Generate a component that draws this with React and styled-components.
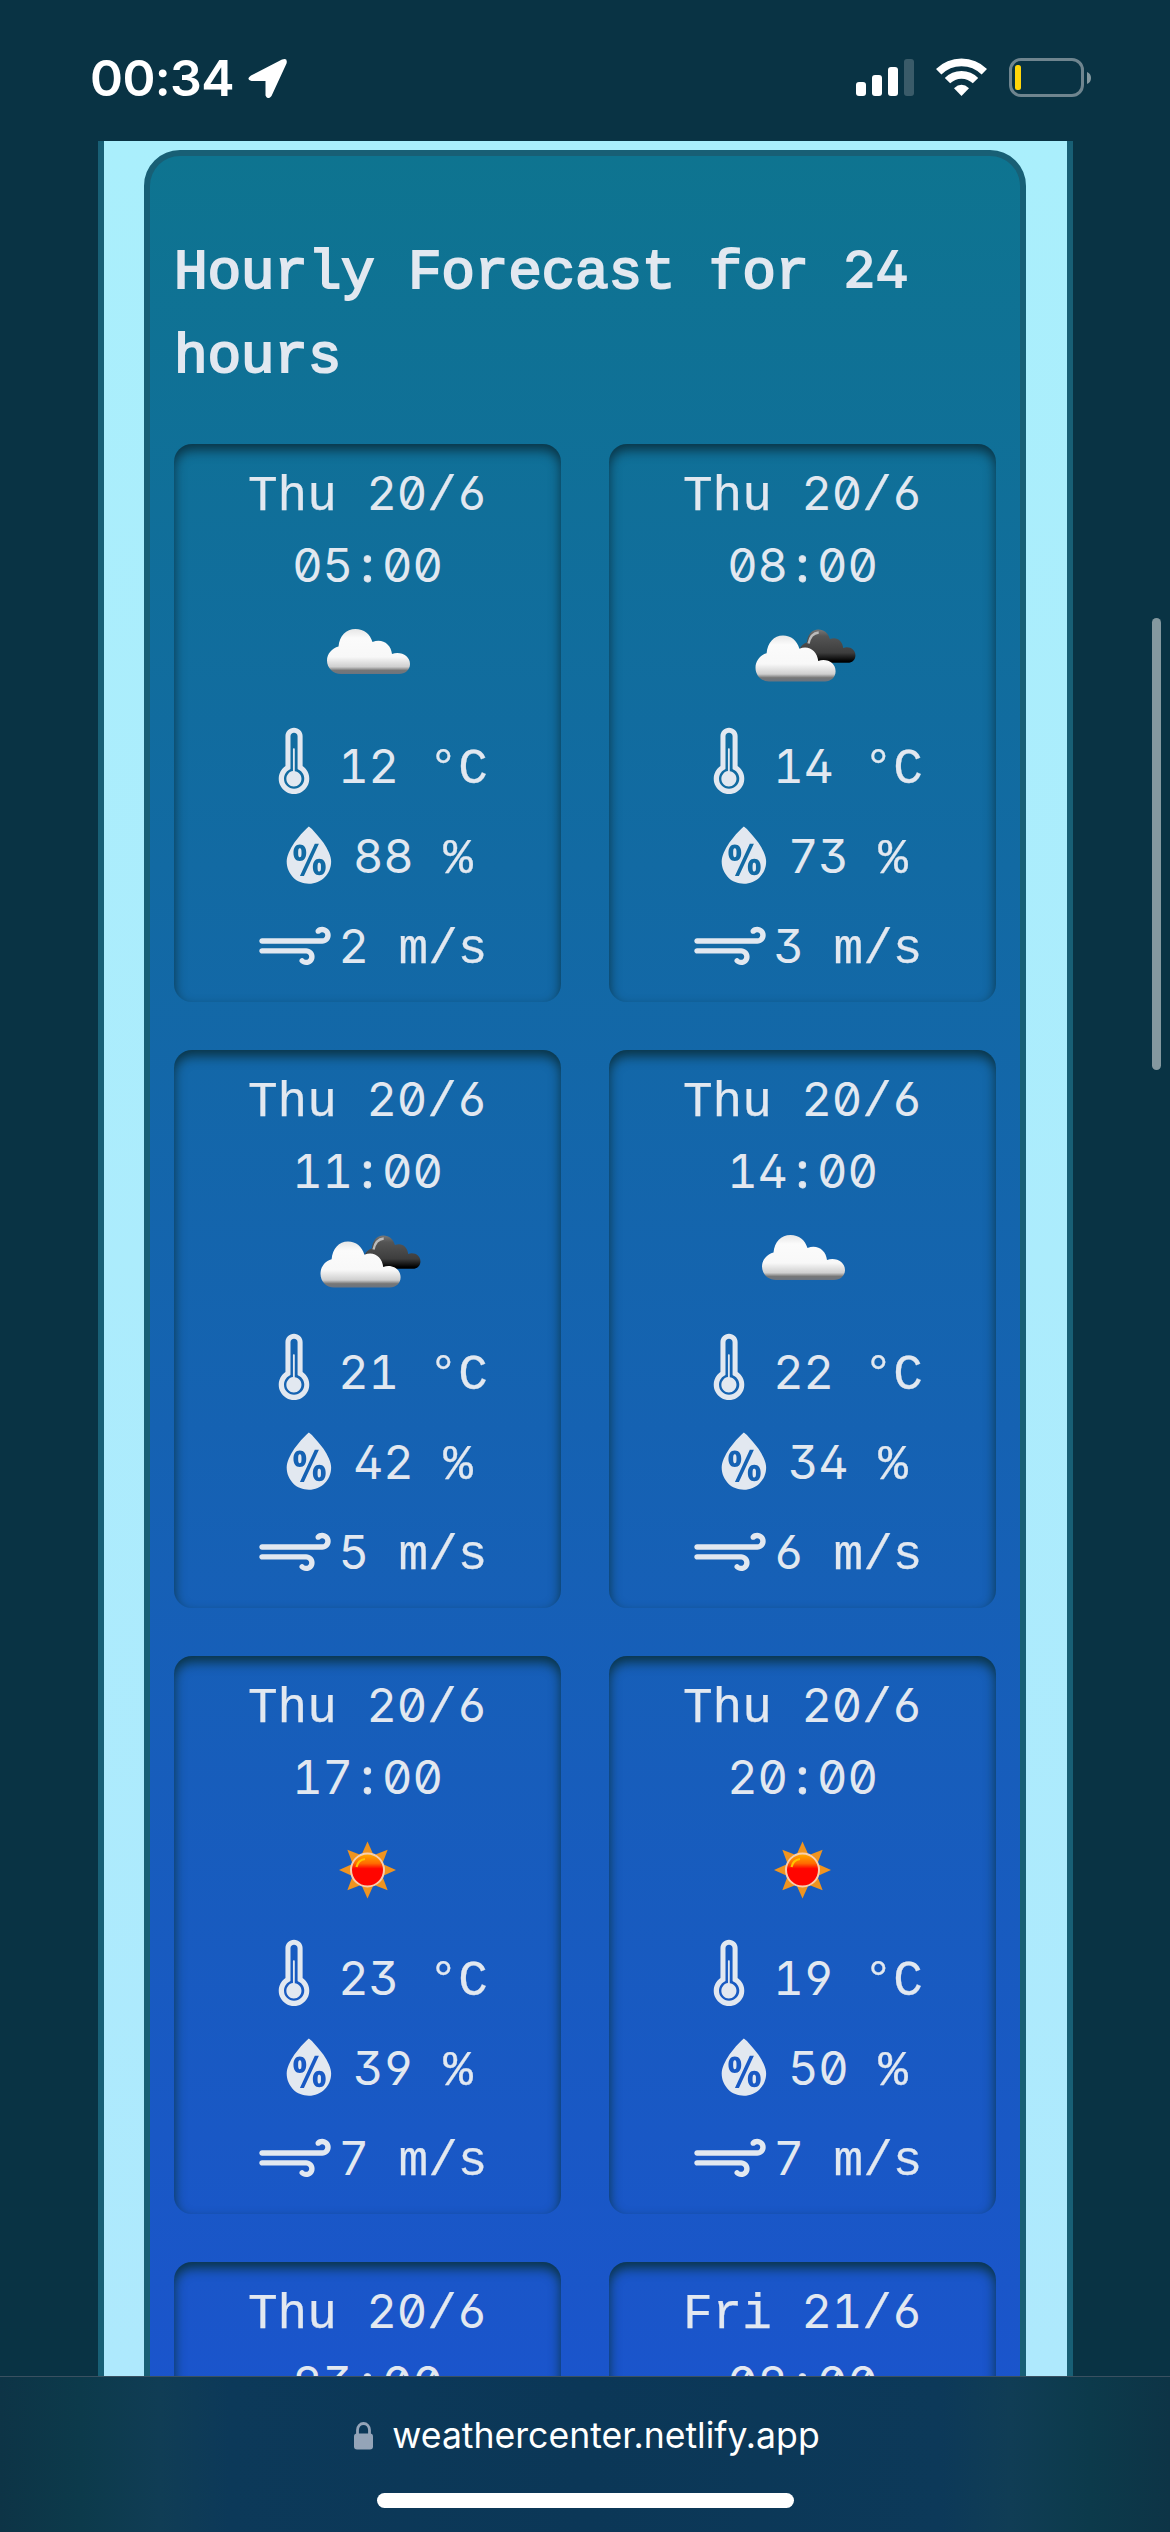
import React from "react";
import styled, { createGlobalStyle } from "styled-components";
import { WiThermometer, WiHumidity, WiStrongWind } from "react-icons/wi";

const GlobalStyle = createGlobalStyle`
  * { box-sizing: border-box; }
  body { margin: 0; background: #093344; }
`;

const Phone = styled.div`
  width: 1170px;
  height: 2532px;
  display: flex;
  flex-direction: column;
  overflow: hidden;
  position: relative;
  background: #093344;
  font-family: "Liberation Mono", monospace;
`;

const StatusBar = styled.header`
  height: 141px;
  flex: none;
  display: flex;
  justify-content: space-between;
  padding: 58px 78px 0 90px;
`;

const Clock = styled.div`
  display: flex;
  align-items: flex-start;
  gap: 14px;
  color: #fff;
  font: 600 50px/40px Inter, sans-serif;
  letter-spacing: -0.6px;
`;

const StatusIcons = styled.div`
  display: flex;
  align-items: flex-start;
  gap: 22px;
`;

const Viewport = styled.main`
  height: 2235px;
  flex: none;
  overflow: hidden;
  padding: 0 97px 0 98px;
`;

const Frame = styled.div`
  width: 975px;
  border: solid #185f75;
  border-width: 0 6px;
  background: linear-gradient(#aaeffc, #aee9fd 2235px);
  padding: 9px 41px 0 40px;
`;

const Panel = styled.section`
  height: 2700px;
  border: 6px solid #185f75;
  border-radius: 36px;
  background: linear-gradient(#0e7490, #1d4ed8);
  padding: 75px 24px 0;
`;

const Title = styled.h3`
  margin: 0 0 45px;
  height: 168px;
  font-size: 56.16px;
  line-height: 84.24px;
  font-weight: 400;
  letter-spacing: -0.28px;
  color: #e2e8f0;
  -webkit-text-stroke: 2px #e2e8f0;
`;

const TitleDigits = styled.span`
  font-family: Inter, sans-serif;
  font-size: 52px;
  line-height: 0;
  font-weight: 600;
  letter-spacing: -0.8px;
  -webkit-text-stroke: 0;
  font-feature-settings: "tnum", "ss01";
`;

const Grid = styled.div`
  display: grid;
  grid-template-columns: repeat(2, 387px);
  gap: 48px;
`;

const Card = styled.article`
  height: 558px;
  padding-top: 12px;
  border-radius: 18px;
  box-shadow: inset 0 6px 12px 0 #0a3344;
  color: #e2e8f0;
  font-size: 49.4px;
  display: flex;
  flex-direction: column;
  align-items: center;
`;

const When = styled.div`
  height: 72px;
  line-height: 72px;
  padding-top: 5px;
  white-space: pre;
  -webkit-text-stroke: 0.25px #e2e8f0;
`;

const Digits = styled.span`
  font-family: Inter, sans-serif;
  font-size: 47px;
  line-height: 0;
  font-weight: 400;
  letter-spacing: -0.15px;
  font-feature-settings: "tnum", "zero", "cv03", "ss01";
  -webkit-text-stroke: 0;
`;

const Colon = styled.span`
  display: inline-block;
  width: 29.2px;
  text-align: center;
  font-family: Inter, sans-serif;
  font-size: 50px;
  line-height: 0;
  -webkit-text-stroke: 0.8px #e2e8f0;
`;

const Sky = styled.div`
  height: 120px;
  display: flex;
  align-items: center;
  justify-content: center;
`;

const Reading = styled.div`
  height: 90px;
  padding-left: 2px;
  display: flex;
  align-items: center;
`;

const Value = styled.span`
  padding-top: 5px;
  line-height: 90px;
  height: 90px;
  margin-left: -1px;
  white-space: pre;
  -webkit-text-stroke: 0.25px #e2e8f0;
`;

const BrowserBar = styled.footer`
  height: 156px;
  flex: none;
  border-top: 1px solid #3a5060;
  background: linear-gradient(90deg, #0d3446 0, #0c3a4b 80px, #103d55 160px, #0c3959 230px, #0b3757 585px, #0c3959 940px, #103d55 1010px, #0c3a4b 1090px, #0d3446 1170px);
  display: flex;
  flex-direction: column;
  align-items: center;
  justify-content: space-between;
  padding: 37px 0 24px;
`;

const Address = styled.div`
  display: flex;
  align-items: center;
  gap: 19px;
  height: 44px;
  padding-left: 4px;
  color: #fff;
  font: 400 35.6px/44px Inter, sans-serif;
`;

const HomeIndicator = styled.div`
  width: 417px;
  height: 15px;
  border-radius: 8px;
  background: #fff;
`;

const ScrollThumb = styled.div`
  position: absolute;
  left: 1152px;
  top: 618px;
  width: 9px;
  height: 452px;
  border-radius: 5px;
  background: #84989f;
`;

const cloudPath =
  "M14 45C6 45 0 39 0 31.500C0 25 5 19 11.500 17.500C12.500 7 19 0 28.500 0C37 0 43 5 45.500 13C55 9 64 15 65 25C74 22 83 27 83 35C83 41 78 45 72 45Z";

function CloudGradients() {
  return (
    <defs>
      <linearGradient id="cloud" x1="0" y1="0" x2="0" y2="1">
        <stop offset="0" stopColor="#e6e6e6" />
        <stop offset="0.2" stopColor="#fbfbfb" />
        <stop offset="0.62" stopColor="#f8f8f8" />
        <stop offset="0.84" stopColor="#cfcfcf" />
        <stop offset="0.92" stopColor="#777" />
        <stop offset="1" stopColor="#6b7480" />
      </linearGradient>
      <linearGradient id="dark" x1="0" y1="0" x2="0" y2="1">
        <stop offset="0" stopColor="#777" />
        <stop offset="0.2" stopColor="#555" />
        <stop offset="0.7" stopColor="#3d3d3d" />
        <stop offset="0.95" stopColor="#000" />
      </linearGradient>
    </defs>
  );
}

function Cloud() {
  return (
    <svg width="120" height="120" viewBox="0 0 120 120">
      <CloudGradients />
      <path transform="translate(19 29)" d={cloudPath} fill="url(#cloud)" />
    </svg>
  );
}

function BrokenClouds() {
  return (
    <svg width="120" height="120" viewBox="0 0 120 120">
      <CloudGradients />
      <g transform="translate(56 29.500) scale(.68 .74)">
        <path d={cloudPath} fill="url(#dark)" />
        <path d="M14 19Q17 5 29 4" fill="none" stroke="#bbb" strokeWidth="3.500" />
      </g>
      <path transform="translate(12.500 35.500) scale(.965 1.02)" d={cloudPath} fill="url(#cloud)" />
    </svg>
  );
}

function Sun() {
  return (
    <svg width="120" height="120" viewBox="0 0 120 120">
      <defs>
        <linearGradient id="sun" x1="0" y1="0" x2="0" y2="1">
          <stop offset="0" stopColor="#ffb000" />
          <stop offset="0.3" stopColor="#ff6a00" />
          <stop offset="0.46" stopColor="#ff0500" />
        </linearGradient>
      </defs>
      <g fill="#f0941f">
        {[0, 45, 90, 135, 180, 225, 270, 315].map((a) => (
          <path key={a} d="M53 44L59.500 29.500L66 44Z" transform={`rotate(${a} 59.500 58)`} />
        ))}
      </g>
      <circle cx="59.500" cy="58" r="16.500" fill="url(#sun)" stroke="#f8cfae" strokeWidth="2" />
      <path d="M48.500 55Q50 48 57 47" fill="none" stroke="#ffc400" strokeWidth="2.200" />
    </svg>
  );
}

const skies = { cloud: Cloud, broken: BrokenClouds, sun: Sun };

function Figures({ children }) {
  return children
    .split(/([0-9]+|:)/)
    .filter(Boolean)
    .map((part, i) => {
      if (part === ":") return <Colon key={i}>:</Colon>;
      return /[0-9]/.test(part) ? <Digits key={i}>{part}</Digits> : part;
    });
}

const hours = [
  { day: "Thu 20/6", time: "05:00", sky: "cloud", temp: 12, humidity: 88, wind: 2 },
  { day: "Thu 20/6", time: "08:00", sky: "broken", temp: 14, humidity: 73, wind: 3 },
  { day: "Thu 20/6", time: "11:00", sky: "broken", temp: 21, humidity: 42, wind: 5 },
  { day: "Thu 20/6", time: "14:00", sky: "cloud", temp: 22, humidity: 34, wind: 6 },
  { day: "Thu 20/6", time: "17:00", sky: "sun", temp: 23, humidity: 39, wind: 7 },
  { day: "Thu 20/6", time: "20:00", sky: "sun", temp: 19, humidity: 50, wind: 7 },
  { day: "Thu 20/6", time: "23:00" },
  { day: "Fri 21/6", time: "02:00" },
];

function HourCard({ hour }) {
  const SkyIcon = skies[hour.sky];
  return (
    <Card>
      <When><Figures>{hour.day}</Figures></When>
      <When><Figures>{hour.time}</Figures></When>
      {SkyIcon && (
        <>
          <Sky><SkyIcon /></Sky>
          <Reading>
            <WiThermometer size={90} />
            <Value><Figures>{`${hour.temp} °C`}</Figures></Value>
          </Reading>
          <Reading>
            <WiHumidity size={90} />
            <Value><Figures>{`${hour.humidity} %`}</Figures></Value>
          </Reading>
          <Reading>
            <WiStrongWind size={90} />
            <Value><Figures>{`${hour.wind} m/s`}</Figures></Value>
          </Reading>
        </>
      )}
    </Card>
  );
}

export default function App() {
  return (
    <Phone>
      <GlobalStyle />
      <StatusBar>
        <Clock>
          00:34
          <svg width="40" height="40" viewBox="0 0 40 40">
            <path d="M3 17.500L34 1.500Q40 -0.500 38.500 5.500L23.500 38Q20 42.500 17.500 37.500V23H3.500Q-2.500 21.500 3 17.500Z" fill="#fff" />
          </svg>
        </Clock>
        <StatusIcons>
          <svg width="58" height="40" viewBox="0 0 58 40" fill="#fff">
            <rect x="0" y="24" width="10" height="14" rx="3" />
            <rect x="16" y="17" width="10" height="21" rx="3" />
            <rect x="32" y="9" width="10" height="29" rx="3" />
            <rect x="48" y="1" width="10" height="37" rx="3" opacity="0.2" />
          </svg>
          <svg width="51" height="40" viewBox="0 0 51 40">
            <g fill="none" stroke="#fff" strokeWidth="7.600">
              <path d="M2.700 13.800A32.300 32.300 0 0 1 48.300 13.800" />
              <path d="M11.500 22.700A19.700 19.700 0 0 1 39.500 22.700" />
            </g>
            <path d="M18 30.200Q25.500 23.500 33 30.200L25.500 38Z" fill="#fff" />
          </svg>
          <svg width="83" height="40" viewBox="0 0 83 40">
            <rect x="1.500" y="1.500" width="72" height="36" rx="10.500" fill="none" stroke="#6f858f" strokeWidth="3" />
            <path d="M78 14Q82 15.500 82 20Q82 24.500 78 26Z" fill="#84989f" />
            <rect x="6" y="7" width="6" height="25" rx="2.500" fill="#ffd60a" />
          </svg>
        </StatusIcons>
      </StatusBar>
      <Viewport>
        <Frame>
          <Panel>
            <Title>Hourly Forecast for <TitleDigits>24</TitleDigits> hours</Title>
            <Grid>
              {hours.map((hour) => (
                <HourCard key={hour.day + hour.time} hour={hour} />
              ))}
            </Grid>
          </Panel>
        </Frame>
      </Viewport>
      <BrowserBar>
        <Address>
          <svg width="19" height="28" viewBox="0 0 19 28">
            <path d="M3.500 13V8a6 6.500 0 0 1 12 0V13" fill="none" stroke="#94a4b8" strokeWidth="2.800" />
            <rect x="0" y="11.500" width="19" height="16" rx="3" fill="#94a4b8" />
          </svg>
          weathercenter.netlify.app
        </Address>
        <HomeIndicator />
      </BrowserBar>
      <ScrollThumb />
    </Phone>
  );
}
